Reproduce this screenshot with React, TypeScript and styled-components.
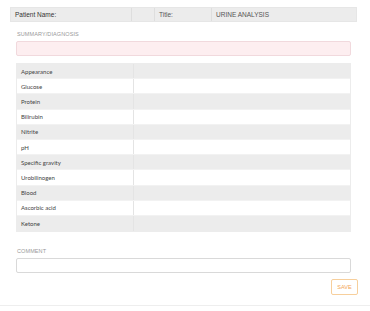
import { createGlobalStyle, styled } from 'styled-components';

const GlobalStyle = createGlobalStyle`
  html, body {
    margin: 0;
    padding: 0;
    background: #ffffff;
  }
  body {
    font-family: "Liberation Sans", Arial, sans-serif;
    color: #333;
  }
`;

const Page = styled.div`
  width: 370px;
  height: 311px;
  box-sizing: border-box;
  padding-top: 7px;
  display: flex;
  flex-direction: column;
`;

const HeaderTable = styled.div`
  margin: 0 13px 0 10px;
  height: 15px;
  display: grid;
  grid-template-columns: 120px 23px 57px 1fr;
  background: #ececec;
  border: 1px solid #e6e6e6;
  box-sizing: border-box;
`;

const HeaderCell = styled.div<{ $strong?: boolean }>`
  display: flex;
  align-items: center;
  padding-left: 4px;
  font-size: 6.5px;
  color: ${(p) => (p.$strong ? '#333' : '#555')};
  & + & {
    border-left: 1px solid #dedede;
  }
`;

const Body = styled.div`
  padding: 0 19px 0 16px;
  display: flex;
  flex-direction: column;
`;

const Label = styled.div`
  font-size: 5.5px;
  color: #999;
  letter-spacing: 0.1px;
  margin-bottom: 4px;
`;

const SummaryLabel = styled(Label)`
  margin-top: 9px;
  padding-left: 1px;
`;

const TextBox = styled.div<{ $tint?: boolean }>`
  height: 15px;
  box-sizing: border-box;
  border: 1px solid ${(p) => (p.$tint ? '#f1d9dd' : '#d9d9d9')};
  background: ${(p) => (p.$tint ? '#fdeef0' : '#ffffff')};
  border-radius: 2px;
`;

const ResultTable = styled.div`
  margin-top: 7px;
  display: flex;
  flex-direction: column;
  border: 1px solid #ececec;
  box-sizing: border-box;
`;

const Row = styled.div<{ $shade: boolean }>`
  height: 15.2px;
  display: grid;
  grid-template-columns: 117px 1fr;
  background: ${(p) => (p.$shade ? '#ececec' : '#ffffff')};
  border-bottom: 1px solid #f2f2f2;
  box-sizing: border-box;
  &:last-child {
    border-bottom: none;
  }
`;

const RowName = styled.div`
  display: flex;
  align-items: center;
  padding-left: 4px;
  font-family: Lato, "Open Sans", sans-serif;
  font-size: 6px;
  color: #444;
  border-right: 1px solid #e4e4e4;
`;

const RowValue = styled.div``;

const CommentLabel = styled(Label)`
  margin-top: 16px;
  padding-left: 1px;
`;

const Actions = styled.div`
  display: flex;
  justify-content: flex-end;
  margin: 6px -7px 0 0;
`;

const SaveButton = styled.button`
  width: 27px;
  height: 16px;
  padding: 0;
  border: 1px solid #f7cf9c;
  border-radius: 2px;
  background: #fff;
  color: #f3a654;
  font-family: "Liberation Sans", Arial, sans-serif;
  font-size: 5.5px;
`;

const Footer = styled.div`
  margin-top: 10px;
  border-top: 1px solid #eeeeee;
`;

const tests = [
  'Appearance',
  'Glucose',
  'Protein',
  'Bilirubin',
  'Nitrite',
  'pH',
  'Specific gravity',
  'Urobilinogen',
  'Blood',
  'Ascorbic acid',
  'Ketone',
];

export default function App() {
  return (
    <>
      <GlobalStyle />
      <Page>
        <HeaderTable>
          <HeaderCell $strong>Patient Name:</HeaderCell>
          <HeaderCell />
          <HeaderCell>Title:</HeaderCell>
          <HeaderCell>URINE ANALYSIS</HeaderCell>
        </HeaderTable>
        <Body>
          <SummaryLabel>SUMMARY/DIAGNOSIS</SummaryLabel>
          <TextBox $tint />
          <ResultTable>
            {tests.map((t, i) => (
              <Row key={t} $shade={i % 2 === 0}>
                <RowName>{t}</RowName>
                <RowValue />
              </Row>
            ))}
          </ResultTable>
          <CommentLabel>COMMENT</CommentLabel>
          <TextBox />
          <Actions>
            <SaveButton>SAVE</SaveButton>
          </Actions>
        </Body>
        <Footer />
      </Page>
    </>
  );
}
